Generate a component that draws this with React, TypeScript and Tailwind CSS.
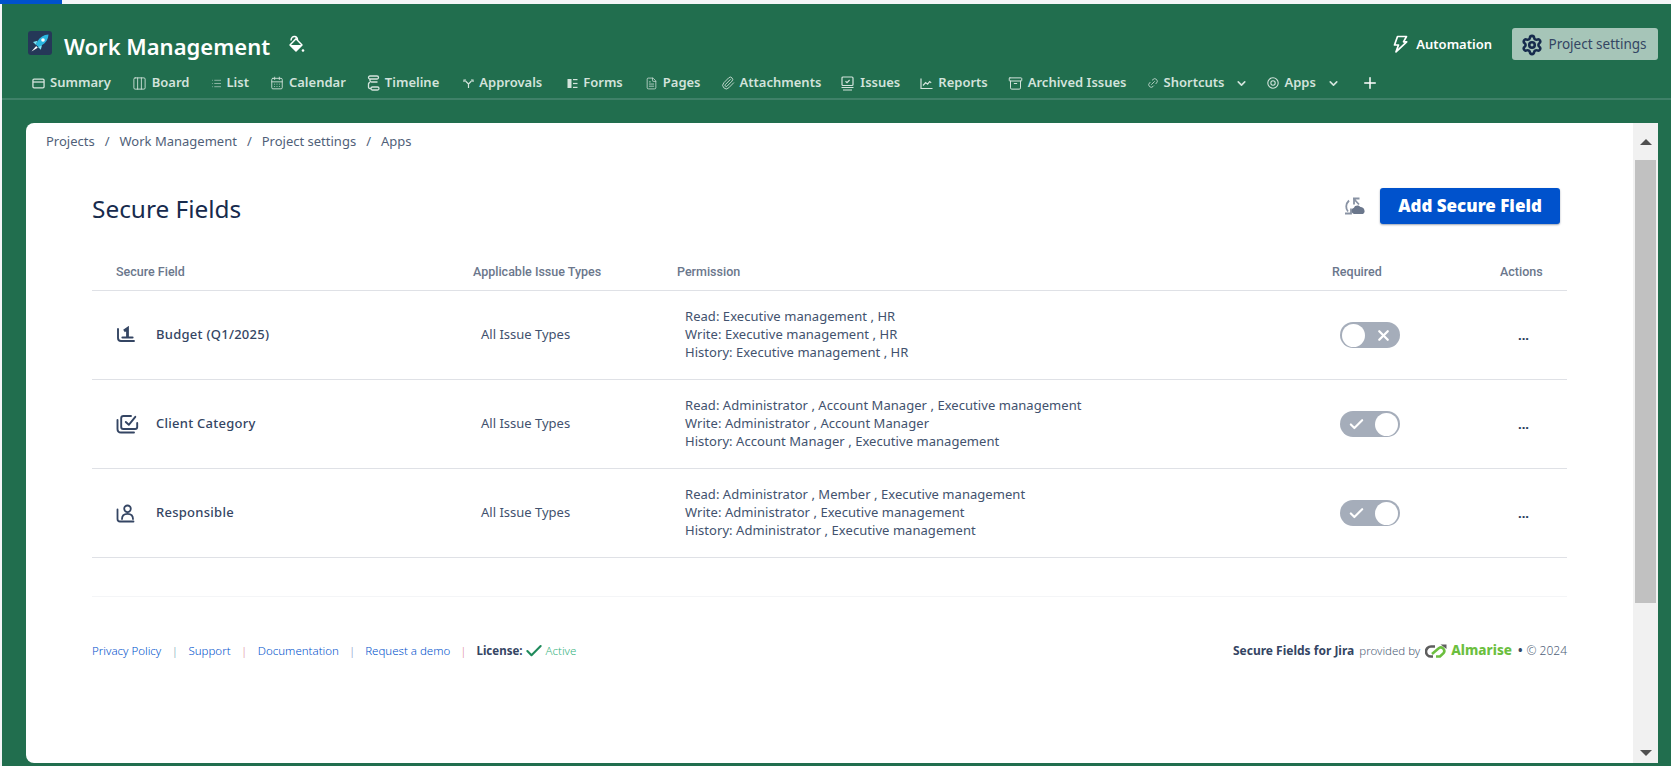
import {
  Archive,
  CalendarDays,
  Check,
  ChevronDown,
  Columns3,
  FileText,
  Link2,
  List,
  Paperclip,
  Plus,
  Settings,
  X,
} from 'lucide-react';
import type { ReactNode } from 'react';

function SummaryIcon() {
  return (
    <svg width="13" height="13" viewBox="0 0 14 14" fill="none" stroke="currentColor" strokeWidth="1.4">
      <rect x="1" y="2.2" width="12" height="9.6" rx="1.2" />
      <path d="M1 5.4h12" />
    </svg>
  );
}

function TimelineIcon() {
  return (
    <svg width="13" height="16" viewBox="0 0 13 16" fill="none" stroke="currentColor" strokeWidth="1.3">
      <rect x="1.5" y="1" width="10" height="3" rx="1.5" />
      <rect x="4" y="12" width="8" height="3" rx="1.5" />
      <path d="M3 4v1.5c0 1 .5 1.5 1.5 1.5h6M4 13.5H3c-1 0-1.5-.5-1.5-1.500V9c0-1 .5-1.500 1.500-1.500" />
    </svg>
  );
}

function ApprovalsIcon() {
  return (
    <svg width="11" height="11" viewBox="0 0 11 11" fill="none" stroke="currentColor" strokeWidth="1.2">
      <path d="M5.5 10V6L2.5 3M5.5 6 8.5 3M1 4V2h2M8 2h2v2" />
    </svg>
  );
}

function FormsIcon() {
  return (
    <svg width="11" height="11" viewBox="0 0 11 11" fill="currentColor">
      <rect x="0.5" y="1" width="4" height="9" />
      <rect x="6" y="1" width="4.5" height="1.2" />
      <rect x="6" y="4.9" width="4.5" height="1.2" />
      <rect x="6" y="8.8" width="4.5" height="1.2" />
    </svg>
  );
}

function IssuesIcon() {
  return (
    <svg width="15" height="15" viewBox="0 0 15 15" fill="none" stroke="currentColor" strokeWidth="1.2">
      <rect x="2" y="1" width="11" height="8.5" rx="1" />
      <path d="m5.5 5.2 1.5 1.4 2.6-2.6M1.5 11.5h12M3 14h9" />
    </svg>
  );
}

function ReportsIcon() {
  return (
    <svg width="13" height="13" viewBox="0 0 13 13" fill="none" stroke="currentColor" strokeWidth="1.2">
      <path d="M1 1.5V11.5H12.5" />
      <path d="m3 8.5 2.6-3 2 1.7 2-2.6 1.6 1.2" />
    </svg>
  );
}

function AppsIcon() {
  return (
    <svg width="12" height="12" viewBox="0 0 12 12" fill="none" stroke="currentColor" strokeWidth="1.1">
      <circle cx="6" cy="6" r="5.2" />
      <circle cx="6" cy="6" r="2.2" />
    </svg>
  );
}

function PaintIcon() {
  return (
    <svg width="17" height="18" viewBox="0 0 17 18" fill="none" className="-mt-[4px] ml-[18px] shrink-0">
      <path d="M3 5.5C3 2.5 5 1 7 1.5s2.500 2 2.500 3.500" stroke="#fff" strokeWidth="1.5" />
      <path d="M8 3.800 14 10l-6 6-6-6z" stroke="#fff" strokeWidth="1.5" strokeLinejoin="round" />
      <path d="M2 10h12l-6 6z" fill="#fff" />
      <circle cx="15" cy="15.5" r="1.3" fill="#fff" />
    </svg>
  );
}

function RocketLogo() {
  return (
    <svg width="24" height="24" viewBox="0 0 24 24" className="-mt-[1px] shrink-0 self-start">
      <rect width="24" height="24" rx="3" fill="#253858" />
      <path d="M20.5 3.5c-5 .3-8.500 2.500-11 6.800L7.800 13.500l3 2.700 3-1.900c4.200-2.600 6.500-6 6.700-10.800z" fill="#2ab6e0" />
      <path d="M9.500 9.800 5 11l2.800 2.800zM14 14.300l-1.200 4.500-2.800-2.700z" fill="#79e2f2" />
      <circle cx="15" cy="9" r="1.8" fill="#fff" />
      <path d="m8.200 15-4.700 5.500 6.200-3.700z" fill="#fff" />
    </svg>
  );
}

function AutomationIcon() {
  return (
    <svg width="15" height="18" viewBox="0 0 15 18" fill="none" stroke="#fff" strokeWidth="1.7" strokeLinejoin="round">
      <path d="M4.500 1.500h9L10.500 6.800h3.200L3 16.800l2.500-6.800H1.500z" />
    </svg>
  );
}

function SyncCloudIcon() {
  return (
    <svg width="22" height="18" viewBox="0 0 22 18" fill="none" className="shrink-0">
      <path d="M4 14.500C1.500 11.500 1.500 7 5 3.500" stroke="#8993a4" strokeWidth="1.8" />
      <path d="M1 16.500h6v-5" stroke="#8993a4" strokeWidth="1.8" />
      <path d="M9 1.500h6.500M10 1.500v6M10 2l5 5.500" stroke="#8993a4" strokeWidth="1.8" />
      <path d="M10.500 17a3.200 3.200 0 0 1-.5-6.300c.7-2.600 5-3.200 6.500-.6 3.400-.6 6 5.400 2.300 6.900z" fill="#6b778c" />
    </svg>
  );
}

function BudgetIcon() {
  return (
    <svg width="20" height="18" viewBox="0 0 20 18" fill="none" stroke="#344563" strokeWidth="1.9" strokeLinecap="round">
      <path d="M2 3v9c0 2 1 3 3 3h13" />
      <path d="M6.500 11.500h10" strokeWidth="2.2" />
      <path d="M8 5 11.500 2.500v8.500" strokeWidth="2.8" strokeLinecap="butt" />
    </svg>
  );
}

function CategoryIcon() {
  return (
    <svg width="23" height="20" viewBox="0 0 23 20" fill="none" stroke="#344563" strokeWidth="1.9" strokeLinecap="round" strokeLinejoin="round">
      <path d="M1.500 6v9c0 2.200 1.300 3.500 3.500 3.500h13" />
      <path d="M15 2H7.500C6 2 5.200 2.800 5.200 4.300v8.700c0 1.200.8 2 2 2h12c1.300 0 2-.8 2-2V9" />
      <path d="m9.800 8 3 2.800 6.500-8" />
    </svg>
  );
}

function PersonIcon() {
  return (
    <svg width="19" height="19" viewBox="0 0 19 19" fill="none" stroke="#344563" strokeWidth="1.8" strokeLinecap="round">
      <path d="M1.500 5.500v9.500c0 1.700 1 2.500 2.500 2.500h13.500" />
      <circle cx="11.500" cy="4.800" r="3.300" />
      <path d="M6 15c0-3.600 2.400-5.200 5.500-5.200S17 11.400 17 15" />
    </svg>
  );
}

function AlmariseLogo() {
  return (
    <svg width="22" height="16" viewBox="0 0 22 16" fill="none" className="shrink-0">
      <path d="M10 3.500H6a5 5 0 0 0 0 10h2" stroke="#5e5e5e" strokeWidth="2.6" />
      <path d="M7 11l7-6a3.500 3.500 0 0 1 4.500 5.200L15 13.500h-4" stroke="#6cbf3f" strokeWidth="2.6" />
      <path d="M15.500 1.500H21.500V6z" fill="#5e5e5e" />
    </svg>
  );
}

const navItems: { label: string; icon: ReactNode; menu?: boolean; offset?: string }[] = [
  { label: 'Summary', icon: <SummaryIcon /> },
  { label: 'Board', icon: <Columns3 size={15} strokeWidth={1.4} /> },
  { label: 'List', icon: <List size={11} strokeWidth={1.3} /> },
  { label: 'Calendar', icon: <CalendarDays size={14} strokeWidth={1.5} /> },
  { label: 'Timeline', icon: <TimelineIcon /> },
  { label: 'Approvals', icon: <ApprovalsIcon />, offset: 'ml-[3px]' },
  { label: 'Forms', icon: <FormsIcon />, offset: 'ml-[4px]' },
  { label: 'Pages', icon: <FileText size={13} strokeWidth={1.4} />, offset: 'ml-[1px]' },
  { label: 'Attachments', icon: <Paperclip size={14} strokeWidth={1.5} />, offset: '-ml-[1px]' },
  { label: 'Issues', icon: <IssuesIcon />, offset: '-ml-[2px]' },
  { label: 'Reports', icon: <ReportsIcon />, offset: '-ml-[1px]' },
  { label: 'Archived Issues', icon: <Archive size={15} strokeWidth={1.6} />, offset: '-ml-[1px]' },
  { label: 'Shortcuts', icon: <Link2 size={12} strokeWidth={1.5} className="-rotate-45" />, menu: true, offset: '-ml-[1px]' },
  { label: 'Apps', icon: <AppsIcon />, menu: true, offset: '-ml-[2px]' },
];

const rows = [
  {
    name: 'Budget (Q1/2025)',
    icon: <BudgetIcon />,
    required: false,
    perms: ['Read: Executive management , HR', 'Write: Executive management , HR', 'History: Executive management , HR'],
  },
  {
    name: 'Client Category',
    icon: <CategoryIcon />,
    required: true,
    perms: [
      'Read: Administrator , Account Manager , Executive management',
      'Write: Administrator , Account Manager',
      'History: Account Manager , Executive management',
    ],
  },
  {
    name: 'Responsible',
    icon: <PersonIcon />,
    required: true,
    perms: [
      'Read: Administrator , Member , Executive management',
      'Write: Administrator , Executive management',
      'History: Administrator , Executive management',
    ],
  },
];

const gridCols = 'grid grid-cols-[381px_204px_655px_168px_67px] items-center';

function Toggle({ on }: { on: boolean }) {
  return (
    <div className="flex h-[26px] w-[60px] items-center justify-between rounded-full bg-[#a5adba] px-[2px]">
      {on ? (
        <>
          <Check size={17} strokeWidth={3} className="ml-[6px] text-white" />
          <span className="h-[23px] w-[23px] rounded-full bg-white" />
        </>
      ) : (
        <>
          <span className="h-[23px] w-[23px] rounded-full bg-white" />
          <X size={17} strokeWidth={3.2} className="mr-[6px] text-white" />
        </>
      )}
    </div>
  );
}

function Sep({ className }: { className: string }) {
  return <span className={className}>|</span>;
}

export default function App() {
  return (
    <div className="flex h-screen flex-col overflow-hidden bg-[#f4f5f7] pt-[4px] pl-[2px] font-['Noto_Sans',sans-serif]">
      <div className="absolute top-0 left-0 h-[4px] w-[62px] bg-[#0052cc]" />
      <div className="flex min-h-0 flex-1 flex-col bg-[#216e4e]">
        <header className="border-b-2 border-[#3f8168]">
          <div className="flex h-[56px] items-end justify-between pr-[13px] pl-[26px]">
            <div className="flex h-[28px] items-center">
              <RocketLogo />
              <span className="ml-[12px] text-[22px] leading-none font-semibold text-white">Work Management</span>
              <PaintIcon />
            </div>
            <div className="flex items-center">
              <AutomationIcon />
              <span className="mr-[20px] ml-[8px] pt-[1px] text-[13px] font-semibold text-white">Automation</span>
              <button className="flex h-[32px] w-[146px] items-center justify-center gap-[5px] rounded-[3px] bg-[#a6c5b8] pt-[1px] pr-[2px] text-[13.5px] text-[#344563]">
                <Settings size={22} strokeWidth={2.8} className="text-[#172b4d]" />
                Project settings
              </button>
            </div>
          </div>
          <nav className="flex h-[38px] items-center gap-[21px] pt-[8px] pl-[30px] text-[13px] font-semibold whitespace-nowrap text-[#d3e3dc]">
            {navItems.map((item) => (
              <div key={item.label} className={`flex items-center gap-[5px] ${item.offset ?? ''}`}>
                {item.icon}
                <span>{item.label}</span>
                {item.menu && <ChevronDown size={13} strokeWidth={3} className="ml-[6px]" />}
              </div>
            ))}
            <Plus size={18} strokeWidth={2} className="text-white" />
          </nav>
        </header>

        <div className="mt-[23px] mr-[13px] mb-[3px] ml-[24px] flex min-h-0 flex-1 overflow-hidden rounded-l-lg bg-white">
          <main className="min-w-0 flex-1 text-[#42526e]">
            <div className="flex h-[37px] items-center gap-[10px] pl-[20px] text-[13px] text-[#505f79]">
              <span>Projects</span>
              <span>/</span>
              <span>Work Management</span>
              <span>/</span>
              <span>Project settings</span>
              <span>/</span>
              <span>Apps</span>
            </div>

            <div className="px-[66px]">
              <div className="mt-[28px] flex h-[36px] items-center justify-between">
                <h1 className="pt-[6px] text-[24.4px] leading-none text-[#172b4d]">Secure Fields</h1>
                <div className="mr-[7px] flex items-center gap-[14px]">
                  <SyncCloudIcon />
                  <button className="h-[36px] w-[180px] rounded-[3px] bg-[#0052cc] text-[17px] font-black text-white shadow-[0_1px_2px_rgba(9,30,66,0.4)]">
                    Add Secure Field
                  </button>
                </div>
              </div>

              <div className={`${gridCols} mt-[31px] h-[36px] border-b border-[#dfe1e6] font-['Roboto',sans-serif] text-[12.5px] font-medium text-[#6b778c]`}>
                <div className="pl-[24px]">Secure Field</div>
                <div>Applicable Issue Types</div>
                <div>Permission</div>
                <div>Required</div>
                <div>Actions</div>
              </div>

              {rows.map((row) => (
                <div key={row.name} className={`${gridCols} h-[89px] border-b border-[#dfe1e6] text-[13px]`}>
                  <div className="flex items-center pl-[24px]">
                    <span className="flex w-[40px] items-center">{row.icon}</span>
                    <span className="font-medium tracking-[0.02em] text-[#344563]">{row.name}</span>
                  </div>
                  <div className="pl-[8px]">All Issue Types</div>
                  <div className="-mt-[3px] pl-[8px] leading-[18px] tracking-[0.05px]">
                    {row.perms.map((p) => (
                      <div key={p}>{p}</div>
                    ))}
                  </div>
                  <div className="pl-[8px]">
                    <Toggle on={row.required} />
                  </div>
                  <div className="pl-[18px] text-[13px] leading-none font-bold text-[#253858]">...</div>
                </div>
              ))}

              <div className="mt-[38px] flex h-[108px] items-center justify-between border-t border-[#f4f5f7] text-[11.5px] font-light">
                <div className="flex items-center whitespace-nowrap text-[#0052cc]">
                  <span>Privacy Policy</span>
                  <Sep className="mx-[10.5px] text-[#6b9ab5]" />
                  <span>Support</span>
                  <Sep className="mx-[10.5px] text-[#de8a9a]" />
                  <span>Documentation</span>
                  <Sep className="mx-[10px] text-[#7f8fc4]" />
                  <span>Request a demo</span>
                  <Sep className="mx-[10px] text-[#de8a9a]" />
                  <span className="font-bold text-[#344563]">License:</span>
                  <Check size={20} strokeWidth={2.5} className="ml-[1px] text-[#1f8a5b]" />
                  <span className="ml-[2px] text-[#36b37e]">Active</span>
                </div>
                <div className="flex items-center text-[12px] whitespace-nowrap text-[#505f79]">
                  <span className="font-bold text-[#344563]">Secure Fields for Jira</span>
                  <span className="ml-[5px] text-[11.5px]">provided by</span>
                  <span className="mr-[4px] ml-[5px]"><AlmariseLogo /></span>
                  <span className="text-[13.5px] font-extrabold text-[#6cbf3f]">Almarise</span>
                  <span className="ml-[6px] font-bold text-[#344563]">•</span>
                  <span className="ml-[4px]">© 2024</span>
                </div>
              </div>
            </div>
          </main>

          <div className="flex w-[25px] shrink-0 flex-col items-center bg-[#f1f1f1] px-[2px]">
            <div className="flex h-[37px] items-center">
              <div className="h-0 w-0 border-x-[6px] border-b-[6px] border-x-transparent border-b-[#505050]" />
            </div>
            <div className="h-[443px] w-full bg-[#c1c1c1]" />
            <div className="flex-1" />
            <div className="flex h-[20px] items-center">
              <div className="h-0 w-0 border-x-[6px] border-t-[6px] border-x-transparent border-t-[#505050]" />
            </div>
          </div>
        </div>
      </div>
    </div>
  );
}
